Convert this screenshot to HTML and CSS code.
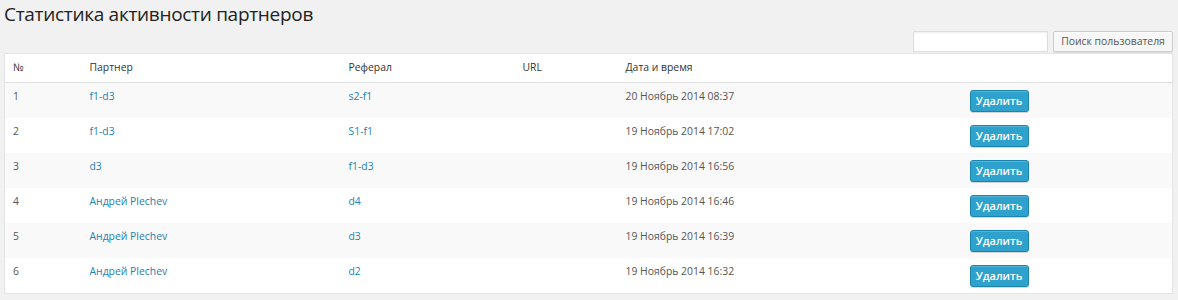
FILE: index.html
```html
<!DOCTYPE html>
<html lang="ru">
<head>
    <meta charset="UTF-8">
    <title>Статистика активности партнеров</title>
    <link rel="stylesheet" href="styles.css">
</head>
<body>
    <div class="wrap">
        <h2 class="page-title">Статистика активности партнеров</h2>

        <form class="tablenav" action="#" method="get">
            <input type="search" class="search-input" name="s">
            <button type="submit" class="button">Поиск пользователя</button>
        </form>

        <table class="list-table">
            <colgroup>
                <col class="col-num">
                <col class="col-partner">
                <col class="col-referal">
                <col class="col-url">
                <col class="col-date">
                <col class="col-action">
            </colgroup>
            <thead>
                <tr>
                    <th>№</th>
                    <th>Партнер</th>
                    <th>Реферал</th>
                    <th>URL</th>
                    <th>Дата и время</th>
                    <th></th>
                </tr>
            </thead>
            <tbody>
                <tr class="alt">
                    <td>1</td>
                    <td><a href="#">f1-d3</a></td>
                    <td><a href="#">s2-f1</a></td>
                    <td></td>
                    <td>20 Ноябрь 2014 08:37</td>
                    <td class="action"><button class="button-primary">Удалить</button></td>
                </tr>
                <tr>
                    <td>2</td>
                    <td><a href="#">f1-d3</a></td>
                    <td><a href="#">S1-f1</a></td>
                    <td></td>
                    <td>19 Ноябрь 2014 17:02</td>
                    <td class="action"><button class="button-primary">Удалить</button></td>
                </tr>
                <tr class="alt">
                    <td>3</td>
                    <td><a href="#">d3</a></td>
                    <td><a href="#">f1-d3</a></td>
                    <td></td>
                    <td>19 Ноябрь 2014 16:56</td>
                    <td class="action"><button class="button-primary">Удалить</button></td>
                </tr>
                <tr>
                    <td>4</td>
                    <td><a href="#">Андрей Plechev</a></td>
                    <td><a href="#">d4</a></td>
                    <td></td>
                    <td>19 Ноябрь 2014 16:46</td>
                    <td class="action"><button class="button-primary">Удалить</button></td>
                </tr>
                <tr class="alt">
                    <td>5</td>
                    <td><a href="#">Андрей Plechev</a></td>
                    <td><a href="#">d3</a></td>
                    <td></td>
                    <td>19 Ноябрь 2014 16:39</td>
                    <td class="action"><button class="button-primary">Удалить</button></td>
                </tr>
                <tr>
                    <td>6</td>
                    <td><a href="#">Андрей Plechev</a></td>
                    <td><a href="#">d2</a></td>
                    <td></td>
                    <td>19 Ноябрь 2014 16:32</td>
                    <td class="action"><button class="button-primary">Удалить</button></td>
                </tr>
            </tbody>
        </table>
    </div>
</body>
</html>
```

FILE: styles.css
```css
:root {
    --bg: #f1f1f1;
    --white: #ffffff;
    --stripe: #f9f9f9;
    --border: #e5e5e5;
    --text: #555555;
    --heading: #333333;
    --link: #2581b3;
    --primary: #2ea2cc;
    --primary-border: #1a84b0;
}

* {
    margin: 0;
    padding: 0;
    box-sizing: border-box;
}

body {
    background-color: var(--bg);
    font-family: 'Open Sans', 'Liberation Sans', sans-serif;
    font-size: 10.4px;
    line-height: 19px;
    color: var(--text);
}

.wrap {
    margin: 0 5px 0 4px;
}

.page-title {
    font-size: 19px;
    font-weight: 400;
    line-height: 29px;
    letter-spacing: -0.3px;
    color: #222222;
}

.tablenav {
    display: flex;
    justify-content: flex-end;
    gap: 5px;
    margin-top: 2px;
    height: 21px;
}

.search-input {
    width: 135px;
    height: 21px;
    border: 1px solid #dddddd;
    background-color: var(--white);
    box-shadow: inset 0 1px 2px rgba(0, 0, 0, 0.07);
    outline: none;
}

.button {
    width: 120px;
    height: 21px;
    padding: 0;
    font-family: inherit;
    font-size: 10.4px;
    line-height: 19px;
    color: var(--text);
    background-color: #f7f7f7;
    border: 1px solid #cccccc;
    border-radius: 2px;
    box-shadow: inset 0 1px 0 #ffffff, 0 1px 0 rgba(0, 0, 0, 0.08);
    cursor: pointer;
}

.list-table {
    width: 100%;
    margin-top: 1px;
    border-collapse: collapse;
    table-layout: fixed;
    background-color: var(--white);
    border: 1px solid var(--border);
    box-shadow: 0 1px 1px rgba(0, 0, 0, 0.04);
}

.col-num { width: 77px; }
.col-partner { width: 259px; }
.col-referal { width: 174px; }
.col-url { width: 103px; }
.col-date { width: 344px; }

.list-table th {
    height: 28px;
    padding: 4px 8px 5px;
    text-align: left;
    font-weight: 400;
    color: var(--heading);
    border-bottom: 1px solid #e1e1e1;
}

.list-table td {
    height: 35px;
    padding: 4px 8px 0;
    vertical-align: top;
}

.list-table tr.alt td {
    background-color: var(--stripe);
}

.list-table a {
    color: var(--link);
    text-decoration: none;
}

.list-table td.action {
    padding: 7px 8px 6px;
}

.button-primary {
    display: block;
    width: 59px;
    height: 22px;
    font-family: inherit;
    font-size: 11px;
    font-weight: 600;
    line-height: 20px;
    color: var(--white);
    background-color: var(--primary);
    border: 1px solid var(--primary-border);
    border-radius: 3px;
    box-shadow: inset 0 1px 0 rgba(120, 200, 230, 0.5), 0 1px 0 rgba(0, 0, 0, 0.15);
    cursor: pointer;
}
```
